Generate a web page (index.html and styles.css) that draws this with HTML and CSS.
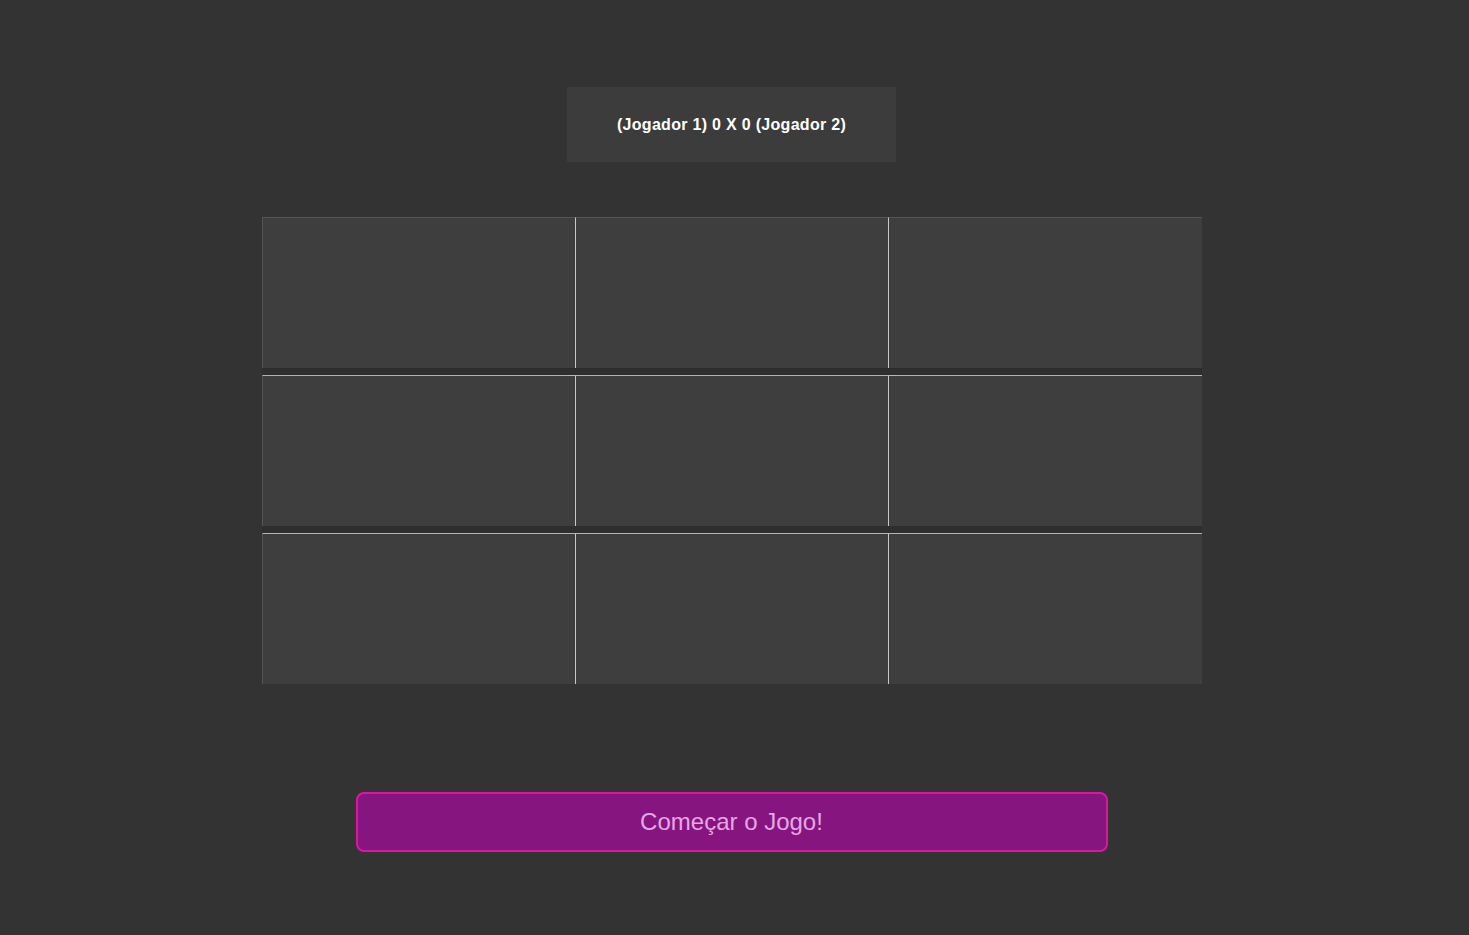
FILE: index.html
```html
<!DOCTYPE html>
<html>
<head>
  <title>Jogo da Velha</title>
  <link rel="stylesheet" href="styles.css">
</head>
<body>
  <main class="game">
    <div class="placar">(Jogador 1) 0 X 0 (Jogador 2)</div>

    <div class="tabuleiro">
      <div class="linha">
        <div class="casa"></div>
        <div class="casa"></div>
        <div class="casa"></div>
      </div>
      <div class="linha">
        <div class="casa"></div>
        <div class="casa"></div>
        <div class="casa"></div>
      </div>
      <div class="linha">
        <div class="casa"></div>
        <div class="casa"></div>
        <div class="casa"></div>
      </div>
    </div>

    <button class="btn-comecar">Começar o Jogo!</button>
  </main>
</body>
</html>
```

FILE: styles.css
```css
body {
  font-family: "Liberation Sans", Arial, sans-serif;
  background-color: #333333;
  margin: 0;
  padding: 0 6px 0 0;
}
.game {
  display: flex;
  flex-direction: column;
  align-items: center;
  padding-top: 87px;
}
.placar {
  width: 329px;
  height: 75px;
  background-color: #3c3c3c;
  color: #ffffff;
  font-weight: bold;
  font-size: 16px;
  letter-spacing: 0.3px;
  display: flex;
  align-items: center;
  justify-content: center;
}
.tabuleiro {
  width: 940px;
  margin-top: 55px;
  display: flex;
  flex-direction: column;
  gap: 7px;
  background-color: #2e2e2e;
}
.linha {
  display: grid;
  grid-template-columns: 313px 313px 314px;
}
.casa {
  height: 150px;
  background-color: #3e3e3e;
  border-left: 1px solid #c8c8c8;
  border-top: 1px solid #b4b4b4;
}
.casa:first-child {
  border-left-color: #555555;
}
.linha:first-child .casa {
  border-top-color: #555555;
}
.btn-comecar {
  margin-top: 108px;
  width: 752px;
  height: 60px;
  background-color: #87157f;
  border: 2px solid #dc15a4;
  border-radius: 8px;
  color: #e6a6e4;
  font-family: "Liberation Sans", Arial, sans-serif;
  font-size: 24px;
  cursor: pointer;
}
```
